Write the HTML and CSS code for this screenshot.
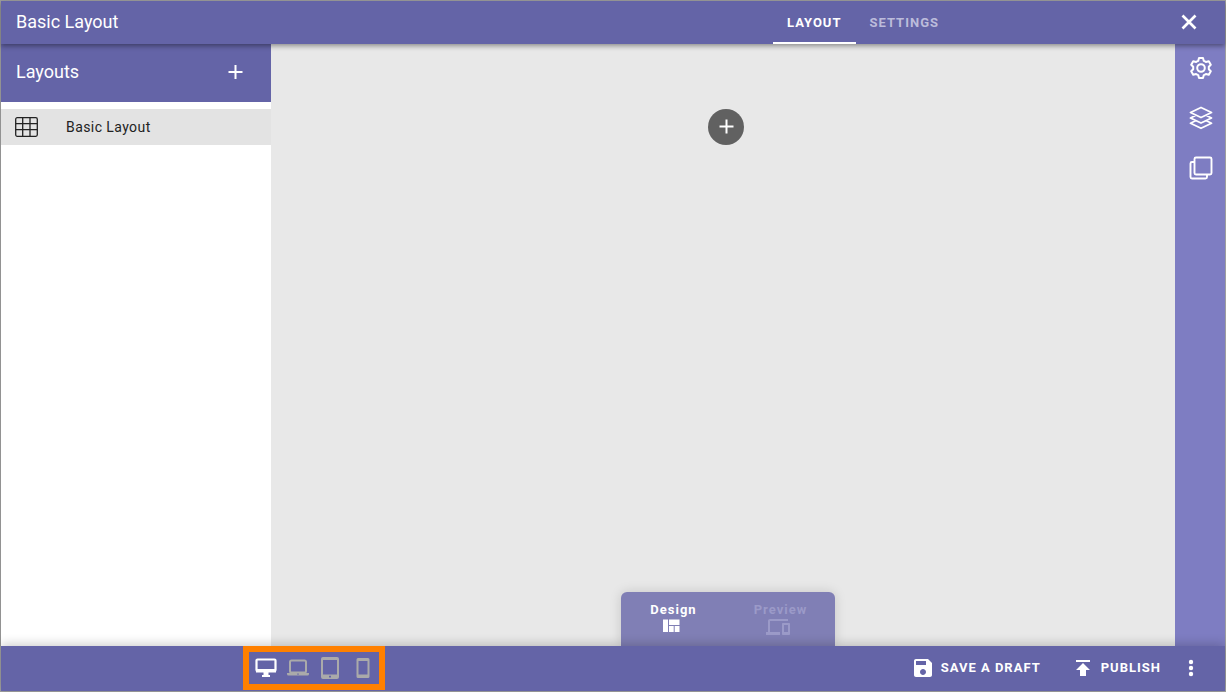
FILE: index.html
```html
<!DOCTYPE html>
<html lang="en">
<head>
<meta charset="utf-8">
<meta name="viewport" content="width=device-width, initial-scale=1">
<title>Basic Layout</title>
<link rel="stylesheet" href="styles.css">
</head>
<body>
<div class="app">
  <header class="topbar">
    <h1 class="topbar-title">Basic Layout</h1>
    <nav class="tabs">
      <a class="tab tab-active" href="#layout">LAYOUT</a>
      <a class="tab" href="#settings">SETTINGS</a>
    </nav>
    <div class="topbar-end">
      <button class="icon-button" type="button" aria-label="Close">
        <svg width="24" height="24" viewBox="0 0 24 24" fill="none" stroke="currentColor" stroke-width="2.700"><path d="M5.500 4.500l13 13M18.500 4.500l-13 13"/></svg>
      </button>
    </div>
  </header>

  <div class="workspace">
    <aside class="sidebar">
      <div class="sidebar-head">
        <h2 class="sidebar-title">Layouts</h2>
        <button class="icon-button" type="button" aria-label="Add layout">
          <svg width="24" height="24" viewBox="0 0 24 24" fill="none" stroke="currentColor" stroke-width="2"><path d="M12.500 5v14M5.500 12h14"/></svg>
        </button>
      </div>
      <ul class="layout-list">
        <li>
          <a class="layout-item" href="#basic-layout">
            <svg width="23" height="20" viewBox="0 0 23 20" fill="none" stroke="currentColor" stroke-width="1.300"><rect x=".7" y=".7" width="21.600" height="18.600" rx="1.500"/><path d="M.7 6.700h21.600M.7 12.700h21.600M7.700.7v18.600M15 .7v18.600"/></svg>
            Basic Layout
          </a>
        </li>
      </ul>
    </aside>

    <main class="canvas">
      <button class="add-button" type="button" aria-label="Add section">
        <svg width="24" height="24" viewBox="0 0 24 24" fill="none" stroke="currentColor" stroke-width="2"><path d="M12.500 4.500v14M5.500 11.500h14"/></svg>
      </button>
      <div class="mode-switch">
        <button class="mode mode-active" type="button">
          <span>Design</span>
          <svg width="24" height="14" viewBox="0 0 24 14" fill="currentColor"><path d="M1 .500h5v12.500H1zM7 .500h10.500v5.500H7zM7 7h4.700v6H7zM12.700 7h4.800v6h-4.800z"/></svg>
        </button>
        <button class="mode" type="button">
          <span>Preview</span>
          <svg width="30" height="16" viewBox="0 4 30 16" fill="currentColor"><path d="M4 6h18V4H4c-1.100 0-2 .9-2 2v11H0v3h14v-3H4V6zm19 2h-6c-.55 0-1 .45-1 1v10c0 .55.45 1 1 1h6c.55 0 1-.45 1-1V9c0-.55-.45-1-1-1zm-1 9h-4v-7h4v7z"/></svg>
        </button>
      </div>
    </main>

    <aside class="rail">
      <button class="icon-button" type="button" aria-label="Settings">
        <svg width="26" height="26" viewBox="0 0 26 26" fill="none" stroke="currentColor" stroke-width="2" stroke-linejoin="round"><circle cx="13" cy="13" r="3.800"/><path d="M11 3h4l.8 2.900q1.200.4 2.100 1.100l2.900-.8 2 3.500-2 2.100v2.400l2 2.100-2 3.500-2.900-.8q-.9.700-2.100 1.100L15 23h-4l-.8-2.900q-1.200-.4-2.100-1.100l-2.900.8-2-3.500 2-2.100v-2.400l-2-2.100 2-3.500 2.900.8q.9-.7 2.100-1.100z"/></svg>
      </button>
      <button class="icon-button" type="button" aria-label="Layers">
        <svg width="26" height="26" viewBox="0 0 26 26" fill="none" stroke="currentColor" stroke-width="1.800" stroke-linejoin="round"><path d="M13 2.500l10.500 5L13 12.500l-10.500-5zM7.500 10.500l-5 2.500L13 18l10.500-5-5-2.500M7.500 15.800l-5 2.500L13 23.300l10.500-5-5-2.500"/></svg>
      </button>
      <button class="icon-button" type="button" aria-label="Pages">
        <svg width="26" height="26" viewBox="0 0 26 26" fill="none" stroke="currentColor" stroke-width="1.900" stroke-linejoin="round"><rect x="6.500" y="2.500" width="17" height="17" rx="1.500"/><path d="M6.500 7H4a1.500 1.500 0 0 0-1.500 1.500V22A1.500 1.500 0 0 0 4 23.500h13.500A1.500 1.500 0 0 0 19 22v-2.500"/></svg>
      </button>
    </aside>
  </div>

  <footer class="bottombar">
    <div class="bottombar-start">
      <div class="devices">
        <button class="device device-active" type="button" aria-label="Desktop">
          <svg width="22" height="22" viewBox="0 0 22 22"><path fill="none" stroke="currentColor" stroke-width="2.200" d="M2.500 2.500h17a1 1 0 0 1 1 1v9.500a1 1 0 0 1-1 1h-17a1 1 0 0 1-1-1v-9.500a1 1 0 0 1 1-1z"/><path fill="currentColor" d="M1 12h20v3.500H1zM8.500 15h5v3h1.500V20H7v-2h1.500z"/></svg>
        </button>
        <button class="device" type="button" aria-label="Laptop">
          <svg width="22" height="22" viewBox="0 0 22 22"><rect x="3" y="3.500" width="16" height="12" rx="1.500" fill="none" stroke="currentColor" stroke-width="2"/><path fill="currentColor" fill-rule="evenodd" d="M0 16h22v1a1.500 1.500 0 0 1-1.500 1.500h-19A1.500 1.500 0 0 1 0 17zM10 16.300v1.200h2v-1.200z"/></svg>
        </button>
        <button class="device" type="button" aria-label="Tablet">
          <svg width="22" height="22" viewBox="0 0 22 22" fill="currentColor" fill-rule="evenodd"><path d="M4 0h14a2 2 0 0 1 2 2v18a2 2 0 0 1-2 2H4a2 2 0 0 1-2-2V2a2 2 0 0 1 2-2zM4 3v14.500h14V3zM10 18.700v1.800h2v-1.800z"/></svg>
        </button>
        <button class="device" type="button" aria-label="Phone">
          <svg width="22" height="22" viewBox="0 0 22 22" fill="currentColor" fill-rule="evenodd"><path d="M7 1h10a1.500 1.500 0 0 1 1.500 1.500v17A1.500 1.500 0 0 1 17 21H7a1.500 1.500 0 0 1-1.500-1.500v-17A1.500 1.500 0 0 1 7 1zM7.500 4v13.500h9V4z"/></svg>
        </button>
      </div>
    </div>
    <div class="actions">
      <button class="action" type="button">
        <svg width="24" height="24" viewBox="0 0 24 24" fill="currentColor"><path d="M17 3H5c-1.110 0-2 .9-2 2v14c0 1.100.89 2 2 2h14c1.100 0 2-.9 2-2V7l-4-4zm-5 16c-1.660 0-3-1.340-3-3s1.340-3 3-3 3 1.340 3 3-1.340 3-3 3zm3-10H5V5h10v4z"/></svg>
        SAVE A DRAFT
      </button>
      <button class="action" type="button">
        <svg width="24" height="24" viewBox="0 0 24 24" fill="currentColor"><path d="M5 4v2h14V4H5zm0 10h4v6h6v-6h4l-7-7-7 7z"/></svg>
        PUBLISH
      </button>
      <button class="icon-button" type="button" aria-label="More actions">
        <svg width="24" height="24" viewBox="0 0 24 24" fill="currentColor"><circle cx="12" cy="6" r="2.200"/><circle cx="12" cy="12" r="2.200"/><circle cx="12" cy="18" r="2.200"/></svg>
      </button>
    </div>
  </footer>
</div>
</body>
</html>
```

FILE: styles.css
```css
:root {
  --sidebar: 270px;
  --rail: 50px;
  --brand: #6464a7;
  --brand-light: #7e7dc2;
}

* {
  box-sizing: border-box;
}

body {
  margin: 0;
  font-family: Roboto, "Liberation Sans", sans-serif;
  font-size: 14px;
  color: #222;
}

h1, h2, ul {
  margin: 0;
  padding: 0;
}

svg {
  display: block;
  flex: none;
}

a {
  color: inherit;
  text-decoration: none;
}

button {
  padding: 0;
  border: 0;
  background: none;
  color: inherit;
  font: inherit;
  cursor: pointer;
}

.app {
  display: flex;
  flex-direction: column;
  min-height: 100vh;
  border: 1px solid #9e9e9e;
}

.topbar {
  position: relative;
  z-index: 2;
  display: grid;
  grid-template-columns: 1fr auto 272px;
  height: 43px;
  background: var(--brand);
  color: #fff;
  box-shadow: 0 2px 5px rgba(0, 0, 0, 0.4);
}

.topbar-title,
.sidebar-title {
  font-size: 18px;
  line-height: 24px;
  font-weight: 400;
}

.topbar-title {
  align-self: center;
  padding: 0 0 2px 15px;
}

.tabs {
  display: flex;
}

.tab {
  display: flex;
  align-items: center;
  padding: 2px 14px 0;
  border-bottom: 2px solid transparent;
  font-size: 13px;
  font-weight: 700;
  letter-spacing: 1px;
  color: #bcbcdb;
}

.tab-active {
  border-color: #fff;
  color: #fff;
}

.topbar-end {
  display: flex;
  align-items: center;
  justify-content: flex-end;
  padding-right: 18px;
}

.icon-button {
  display: grid;
  place-items: center;
  width: 36px;
  height: 36px;
}

.workspace {
  display: grid;
  grid-template-columns: var(--sidebar) 1fr var(--rail);
  flex: 1;
}

.sidebar {
  background: #fff;
  box-shadow: 0 0 3px rgba(0, 0, 0, 0.2);
}

.sidebar-head {
  display: flex;
  align-items: center;
  justify-content: space-between;
  height: 58px;
  padding: 0 18px 2px 15px;
  background: var(--brand);
  color: #fff;
}

.layout-list {
  padding-top: 7px;
  list-style: none;
}

.layout-item {
  display: flex;
  align-items: center;
  gap: 28px;
  height: 36px;
  padding-left: 14px;
  background: #e3e3e3;
  letter-spacing: 0.03em;
}

.canvas {
  display: flex;
  flex-direction: column;
  align-items: center;
  padding: 65px 0 0 6px;
  background: #e8e8e8;
}

.add-button {
  display: grid;
  place-items: center;
  width: 36px;
  height: 36px;
  border-radius: 50%;
  background: #616161;
  color: #fff;
}

.mode-switch {
  display: grid;
  grid-template-columns: 1fr 1fr;
  width: 214px;
  height: 54px;
  margin: auto 0 0 4px;
  border-radius: 6px 6px 0 0;
  background: #807fb5;
  box-shadow: 0 0 12px rgba(0, 0, 0, 0.15);
}

.mode {
  display: flex;
  flex-direction: column;
  align-items: center;
  gap: 1px;
  padding: 9px 2px 0 0;
  font-size: 13px;
  line-height: 17px;
  font-weight: 700;
  letter-spacing: 1px;
  color: #9b9ac8;
}

.mode-active {
  color: #fff;
}

.rail {
  display: flex;
  flex-direction: column;
  align-items: center;
  gap: 14px;
  padding: 6px 0 0 2px;
  background: var(--brand-light);
  color: #fff;
}

.bottombar {
  position: relative;
  z-index: 2;
  display: flex;
  align-items: center;
  justify-content: space-between;
  height: 45px;
  background: var(--brand);
  color: #fff;
  box-shadow: 0 -2px 10px rgba(0, 0, 0, 0.2);
}

.bottombar-start {
  padding: 0 0 1px 242px;
}

.devices {
  display: flex;
  align-items: center;
  gap: 10px;
  height: 44px;
  padding: 0 6px;
  border: 6px solid #ff8000;
  color: #aaa;
}

.device-active {
  color: #fff;
}

.actions {
  display: flex;
  align-items: center;
  padding: 0 16px 2px 0;
}

.action {
  display: flex;
  align-items: center;
  gap: 6px;
  margin-right: 30px;
  font-size: 13px;
  font-weight: 700;
  letter-spacing: 1px;
}

.action + .icon-button {
  margin-left: -18px;
}
```
